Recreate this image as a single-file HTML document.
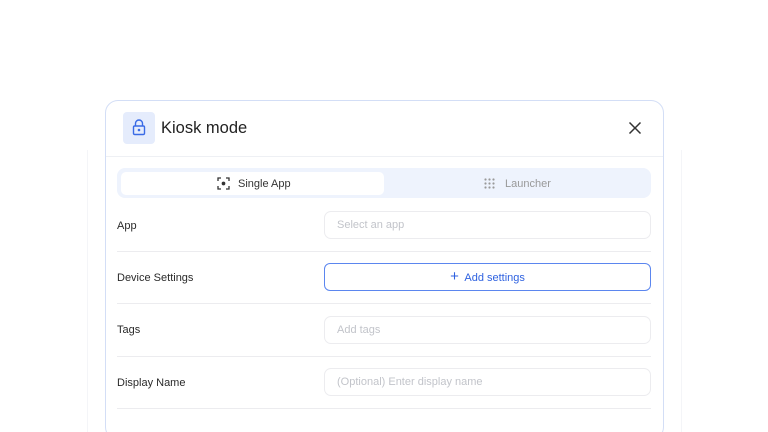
<!DOCTYPE html>
<html style="overflow:hidden;height:432px"><head><style>
*{box-sizing:border-box;margin:0;padding:0}
body{width:768px;height:432px;overflow:hidden;background:#fff;font-family:"Liberation Sans",sans-serif;position:relative}
.card{position:absolute;left:105px;top:100px;width:559px;height:340px;border:1px solid #d3def6;border-radius:13px;background:#fff}
.abs{position:absolute}
.ic{left:123px;top:112px;width:32px;height:32px;background:#e5ecfc;border-radius:4px}
.title{left:161px;top:119px;font-size:16.5px;color:#222}
.hd{left:106px;top:156px;width:557px;height:1px;background:#eef0f4}
.tabs{left:117px;top:168px;width:534px;height:30px;background:#eef3fd;border-radius:8px}
.act{left:121px;top:172px;width:263px;height:23px;background:#fff;border-radius:5px}
.t{font-size:11px;color:#333}
.lbl{left:117px;font-size:11px;color:#2a2a2a}
.inp{left:324px;width:327px;height:28px;border:1px solid #ececef;border-radius:7px;font-size:11px;color:#c2c4ca;padding:7px 12px}
.div{left:117px;width:534px;height:1px;background:#ececef}
.btn{left:324px;top:263px;width:327px;height:28px;border:1.5px solid #5b86ef;border-radius:6px;color:#2f62e0;font-size:11px;text-align:center;line-height:25px}
.g{background:#f4f5f8}
</style></head><body>
<div class="abs g" style="left:87px;top:150px;width:1px;height:282px"></div>
<div class="abs g" style="left:681px;top:150px;width:1px;height:282px"></div>
<div class="card"></div>
<div class="abs ic"><svg width="32" height="32" viewBox="0 0 32 32" fill="none" stroke="#3a6be6" stroke-width="1.4"><rect x="10.5" y="14" width="11" height="8.5" rx="1.2"/><path d="M12.5 14v-2.5a3.5 3.5 0 0 1 7 0V14"/><circle cx="16" cy="18" r=".6" fill="#3a6be6"/></svg></div>
<div class="abs title">Kiosk mode</div>
<svg class="abs" style="left:628px;top:121px" width="14" height="14" viewBox="0 0 14 14" stroke="#333" stroke-width="1.5"><path d="M1.5 1.5l11 11M12.5 1.5l-11 11"/></svg>
<div class="abs hd"></div>
<div class="abs tabs"></div>
<div class="abs act"></div>
<svg class="abs" style="left:217px;top:177px" width="13" height="13" viewBox="0 0 13 13" fill="none" stroke="#333" stroke-width="1.3"><path d="M1 4V1h3M9 1h3v3M12 9v3H9M4 12H1V9"/><circle cx="6.5" cy="6.5" r="1.2" fill="#333"/></svg>
<div class="abs t" style="left:238px;top:178px">Single App</div>
<svg class="abs" style="left:484px;top:178px" width="11" height="11" viewBox="0 0 11 11" fill="#999"><circle cx="1.5" cy="1.5" r="1.1"/><circle cx="5.5" cy="1.5" r="1.1"/><circle cx="9.5" cy="1.5" r="1.1"/><circle cx="1.5" cy="5.5" r="1.1"/><circle cx="5.5" cy="5.5" r="1.1"/><circle cx="9.5" cy="5.5" r="1.1"/><circle cx="1.5" cy="9.5" r="1.1"/><circle cx="5.5" cy="9.5" r="1.1"/><circle cx="9.5" cy="9.5" r="1.1"/></svg>
<div class="abs t" style="left:505px;top:178px;color:#999">Launcher</div>
<div class="abs lbl" style="top:220px">App</div>
<div class="abs inp" style="top:211px">Select an app</div>
<div class="abs div" style="top:251px"></div>
<div class="abs lbl" style="top:272px">Device Settings</div>
<div class="abs btn"><span style="font-size:15px;font-weight:300">+</span>&nbsp; Add settings</div>
<div class="abs div" style="top:303px"></div>
<div class="abs lbl" style="top:324px">Tags</div>
<div class="abs inp" style="top:316px">Add tags</div>
<div class="abs div" style="top:356px"></div>
<div class="abs lbl" style="top:377px">Display Name</div>
<div class="abs inp" style="top:368px">(Optional) Enter display name</div>
<div class="abs div" style="top:408px"></div>
</body></html>
